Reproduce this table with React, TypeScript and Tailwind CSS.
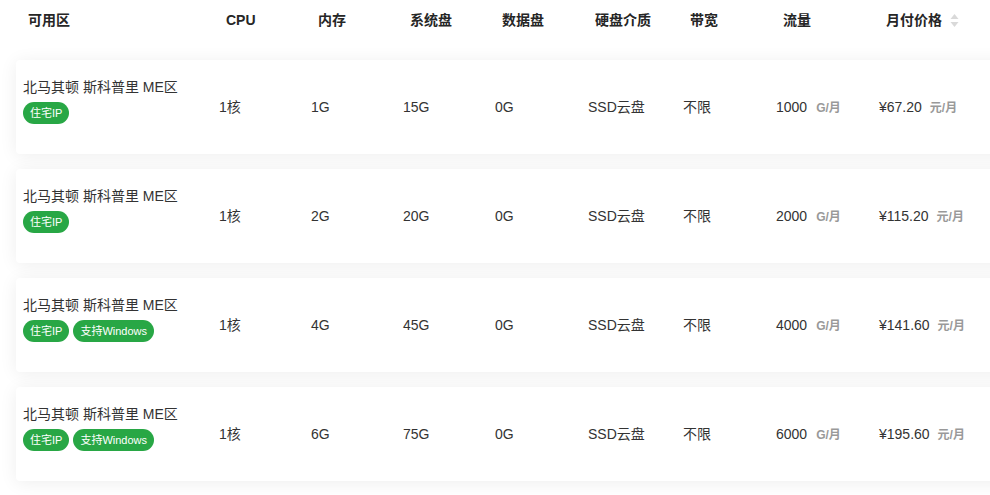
import React from "react";

interface Plan {
  cpu: string;
  mem: string;
  sys: string;
  data: string;
  traffic: string;
  price: string;
  windows: boolean;
}

const plans: Plan[] = [
  { cpu: "1核", mem: "1G", sys: "15G", data: "0G", traffic: "1000", price: "¥67.20", windows: false },
  { cpu: "1核", mem: "2G", sys: "20G", data: "0G", traffic: "2000", price: "¥115.20", windows: false },
  { cpu: "1核", mem: "4G", sys: "45G", data: "0G", traffic: "4000", price: "¥141.60", windows: true },
  { cpu: "1核", mem: "6G", sys: "75G", data: "0G", traffic: "6000", price: "¥195.60", windows: true },
];

const cols = "grid grid-cols-[196px_92px_92px_92px_93px_95px_93px_103px_1fr]";

function SortIcon() {
  return (
    <svg width="9" height="15" viewBox="0 0 9 15" className="ml-[8px]">
      <path d="M4.5 1 L8.5 6 L0.5 6 Z" fill="#d9d9d9" />
      <path d="M4.5 14 L8.5 9 L0.5 9 Z" fill="#d9d9d9" />
    </svg>
  );
}

function Tag({ children }: { children: React.ReactNode }) {
  return (
    <span className="inline-flex h-[22px] items-center rounded-full bg-[#28a745] px-[7px] text-[11px] leading-none text-white">
      {children}
    </span>
  );
}

export default function App() {
  const headers = ["CPU", "内存", "系统盘", "数据盘", "硬盘介质", "带宽", "流量"];

  return (
    <div
      className="h-[495px] w-[990px] overflow-hidden bg-white text-[14px] text-[#333]"
      style={{ fontFamily: '"Liberation Sans", "Noto Sans CJK SC", sans-serif' }}
    >
      {/* Table header */}
      <div className={`${cols} h-[40px] items-center pl-[16px] font-bold text-[#262626]`}>
        <div className="pl-[12px]">可用区</div>
        {headers.map((h) => (
          <div key={h} className="pl-[14px]">{h}</div>
        ))}
        <div className="flex items-center pl-[14px]">
          月付价格
          <SortIcon />
        </div>
      </div>

      {/* Rows */}
      <div className="mt-[20px] flex flex-col gap-[15px] pl-[16px]">
        {plans.map((p, i) => (
          <div
            key={i}
            className={`${cols} h-[94px] w-[1010px] items-center rounded-[4px] bg-white shadow-[0_2px_18px_rgba(0,0,0,0.07)]`}
          >
            <div className="pb-[14px] pl-[7px]">
              <div className="leading-[22px]">北马其顿 斯科普里 ME区</div>
              <div className="mt-[4px] flex gap-[4px]">
                <Tag>住宅IP</Tag>
                {p.windows && <Tag>支持Windows</Tag>}
              </div>
            </div>
            <div className="pl-[7px]">{p.cpu}</div>
            <div className="pl-[7px]">{p.mem}</div>
            <div className="pl-[7px]">{p.sys}</div>
            <div className="pl-[7px]">{p.data}</div>
            <div className="pl-[7px]">SSD云盘</div>
            <div className="pl-[7px]">不限</div>
            <div className="flex items-baseline pl-[7px]">
              {p.traffic}
              <span className="ml-[9px] text-[12px] font-bold text-[#999]">G/月</span>
            </div>
            <div className="flex items-baseline pl-[7px]">
              {p.price}
              <span className="ml-[8px] text-[12px] font-bold text-[#999]">元/月</span>
            </div>
          </div>
        ))}
      </div>
    </div>
  );
}
